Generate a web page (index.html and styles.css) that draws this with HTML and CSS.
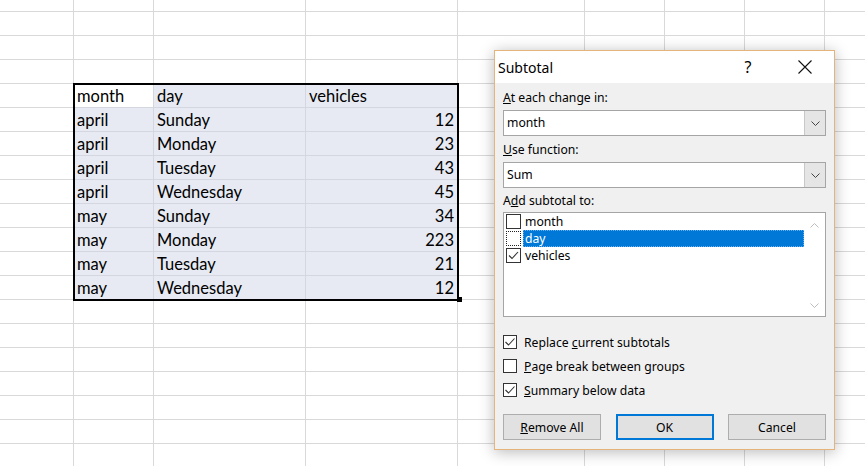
FILE: index.html
```html
<!DOCTYPE html>
<html lang="en">

<head>
  <meta charset="UTF-8">
  <title>Subtotal</title>
  <link rel="stylesheet" href="styles.css">
</head>

<body>
  <div class="sheet">
    <div class="range">
      <div class="cell active">month</div>
      <div class="cell">day</div>
      <div class="cell">vehicles</div>

      <div class="cell">april</div>
      <div class="cell">Sunday</div>
      <div class="cell num">12</div>

      <div class="cell">april</div>
      <div class="cell">Monday</div>
      <div class="cell num">23</div>

      <div class="cell">april</div>
      <div class="cell">Tuesday</div>
      <div class="cell num">43</div>

      <div class="cell">april</div>
      <div class="cell">Wednesday</div>
      <div class="cell num">45</div>

      <div class="cell">may</div>
      <div class="cell">Sunday</div>
      <div class="cell num">34</div>

      <div class="cell">may</div>
      <div class="cell">Monday</div>
      <div class="cell num">223</div>

      <div class="cell">may</div>
      <div class="cell">Tuesday</div>
      <div class="cell num">21</div>

      <div class="cell">may</div>
      <div class="cell">Wednesday</div>
      <div class="cell num">12</div>
    </div>
  </div>

  <div class="dialog">
    <div class="titlebar">
      <span class="title">Subtotal</span>
      <span class="help">?</span>
      <span class="close">
        <svg width="14" height="14" viewBox="0 0 14 14"><path d="M0.5 0.5L13.5 13.5M13.5 0.5L0.5 13.5" stroke="#111" stroke-width="1.1" fill="none"/></svg>
      </span>
    </div>

    <div class="body">
      <div class="label"><u>A</u>t each change in:</div>
      <div class="combo">
        <span class="combo-value">month</span>
        <span class="combo-arrow">
          <svg width="9" height="5" viewBox="0 0 9 5"><path d="M0.5 0.5L4.5 4.5L8.5 0.5" stroke="#444" fill="none"/></svg>
        </span>
      </div>

      <div class="label gap"><u>U</u>se function:</div>
      <div class="combo">
        <span class="combo-value">Sum</span>
        <span class="combo-arrow">
          <svg width="9" height="5" viewBox="0 0 9 5"><path d="M0.5 0.5L4.5 4.5L8.5 0.5" stroke="#444" fill="none"/></svg>
        </span>
      </div>

      <div class="label gap-sm">A<u>d</u>d subtotal to:</div>
      <div class="listbox">
        <div class="list-items">
          <div class="list-item"><span class="box"></span><span class="item-text">month</span></div>
          <div class="list-item selected"><span class="box focus"></span><span class="item-text">day</span></div>
          <div class="list-item">
            <span class="box">
              <svg width="13" height="13" viewBox="0 0 13 13"><path d="M2 6.5L5 9.5L11 3" stroke="#333" stroke-width="1.1" fill="none"/></svg>
            </span>
            <span class="item-text">vehicles</span>
          </div>
        </div>
        <div class="scrollbar">
          <svg width="9" height="5" viewBox="0 0 9 5"><path d="M0.5 4.5L4.5 0.5L8.5 4.5" stroke="#bdbdbd" fill="none"/></svg>
          <svg width="9" height="5" viewBox="0 0 9 5"><path d="M0.5 0.5L4.5 4.5L8.5 0.5" stroke="#bdbdbd" fill="none"/></svg>
        </div>
      </div>

      <div class="options">
        <div class="option">
          <span class="check">
            <svg width="12" height="12" viewBox="0 0 12 12"><path d="M1.5 6L4.5 9L10.5 2.5" stroke="#333" stroke-width="1.1" fill="none"/></svg>
          </span>
          <span>Replace <u>c</u>urrent subtotals</span>
        </div>
        <div class="option">
          <span class="check"></span>
          <span><u>P</u>age break between groups</span>
        </div>
        <div class="option">
          <span class="check">
            <svg width="12" height="12" viewBox="0 0 12 12"><path d="M1.5 6L4.5 9L10.5 2.5" stroke="#333" stroke-width="1.1" fill="none"/></svg>
          </span>
          <span><u>S</u>ummary below data</span>
        </div>
      </div>

      <div class="buttons">
        <button class="button"><u>R</u>emove All</button>
        <button class="button primary">OK</button>
        <button class="button">Cancel</button>
      </div>
    </div>
  </div>
</body>

</html>
```

FILE: styles.css
```css
* {
  box-sizing: border-box;
}

body {
  margin: 0;
  width: 865px;
  height: 466px;
  overflow: hidden;
  position: relative;
  background-color: #fff;
  background-image:
    linear-gradient(to right,
      transparent 73px, #d9d9d9 73px 74px,
      transparent 74px 153px, #d9d9d9 153px 154px,
      transparent 154px 305px, #d9d9d9 305px 306px,
      transparent 306px 457px, #d9d9d9 457px 458px,
      transparent 458px 584px, #d9d9d9 584px 585px,
      transparent 585px 664px, #d9d9d9 664px 665px,
      transparent 665px 744px, #d9d9d9 744px 745px,
      transparent 745px 824px, #d9d9d9 824px 825px,
      transparent 825px),
    repeating-linear-gradient(to bottom,
      transparent 0 11px, #d9d9d9 11px 12px, transparent 12px 24px);
}

/* spreadsheet */
.sheet {
  padding: 84px 0 0 74px;
}

.range {
  position: relative;
  display: grid;
  grid-template-columns: 80px 152px 152px;
  grid-auto-rows: 24px;
  width: 384px;
  background-color: #e7eaf2;
  outline: 2px solid #000;
  outline-offset: -1px;
  font-family: Lato, "Liberation Sans", sans-serif;
  font-size: 16.5px;
  color: #000;
}

.range::after {
  content: '';
  position: absolute;
  right: -4px;
  bottom: -2px;
  width: 5px;
  height: 5px;
  background-color: #000;
}

.cell {
  padding: 2px 3px 0 3px;
  line-height: 21px;
  border-right: 1px solid #d4d7df;
  border-bottom: 1px solid #d4d7df;
  white-space: nowrap;
}

.cell.active {
  background-color: #fff;
}

.cell.num {
  text-align: right;
}

/* dialog */
.dialog {
  position: absolute;
  left: 494px;
  top: 50px;
  width: 341px;
  border: 1px solid #e3b47c;
  background-color: #f0f0f0;
  box-shadow: 0 2px 14px rgba(0, 0, 0, .28);
  font-family: "Noto Sans", "Open Sans", sans-serif;
  font-size: 12.2px;
  color: #000;
}

.titlebar {
  display: flex;
  align-items: center;
  height: 32px;
  padding-left: 3px;
  background-color: #fff;
}

.titlebar .title {
  font-size: 14px;
  margin-right: auto;
}

.titlebar .help {
  font-size: 16px;
  width: 46px;
  text-align: center;
  margin-right: 4px;
}

.titlebar .close {
  display: flex;
  justify-content: center;
  width: 46px;
  margin: 0 6px 0 7px;
}

.body {
  padding: 0 8px 9px 8px;
}

.label {
  margin-top: 7px;
  line-height: 16px;
}

.label.gap {
  margin-top: 6px;
}

.label.gap-sm {
  margin-top: 5px;
}

.combo {
  display: flex;
  height: 26px;
  margin-top: 4px;
  border: 1px solid #a5a5a5;
  background-color: #fff;
}

.combo-value {
  flex: 1;
  padding-left: 3px;
  line-height: 24px;
}

.combo-arrow {
  display: flex;
  align-items: center;
  justify-content: center;
  width: 21px;
  background-color: #e5e5e5;
  border-left: 1px solid #c8c8c8;
}

.listbox {
  display: flex;
  height: 105px;
  margin-top: 3px;
  border: 1px solid #a5a5a5;
  background-color: #fff;
}

.list-items {
  flex: 1;
  padding: 0 0 0 2px;
}

.list-item {
  display: flex;
  align-items: center;
  height: 17px;
}

.list-item .box {
  display: flex;
  align-items: center;
  justify-content: center;
  width: 15px;
  height: 15px;
  margin-right: 2px;
  border: 1px solid #333;
}

.list-item .box.focus {
  border: 1px dotted #222;
}

.list-item .item-text {
  flex: 1;
  height: 17px;
  padding-left: 2px;
  line-height: 17px;
}

.list-item.selected .item-text {
  color: #fff;
  background-color: #0078d7;
  border: 1px dotted #6ab0ec;
  padding-left: 1px;
  line-height: 15px;
}

.scrollbar {
  display: flex;
  flex-direction: column;
  align-items: center;
  justify-content: space-between;
  width: 21px;
  padding: 10px 0 8px 0;
}

.options {
  margin-top: 13px;
}

.option {
  display: flex;
  align-items: center;
  height: 24px;
}

.option .check {
  display: flex;
  align-items: center;
  justify-content: center;
  width: 14px;
  height: 14px;
  margin-right: 7px;
  border: 1px solid #333;
  background-color: #fff;
}

.buttons {
  display: flex;
  justify-content: space-between;
  margin-top: 12px;
}

.button {
  width: 98px;
  height: 26px;
  padding: 0;
  border: 1px solid #adadad;
  background-color: #e1e1e1;
  font-family: inherit;
  font-size: 12.2px;
  color: #000;
}

.button.primary {
  border: 2px solid #0078d7;
}
```
